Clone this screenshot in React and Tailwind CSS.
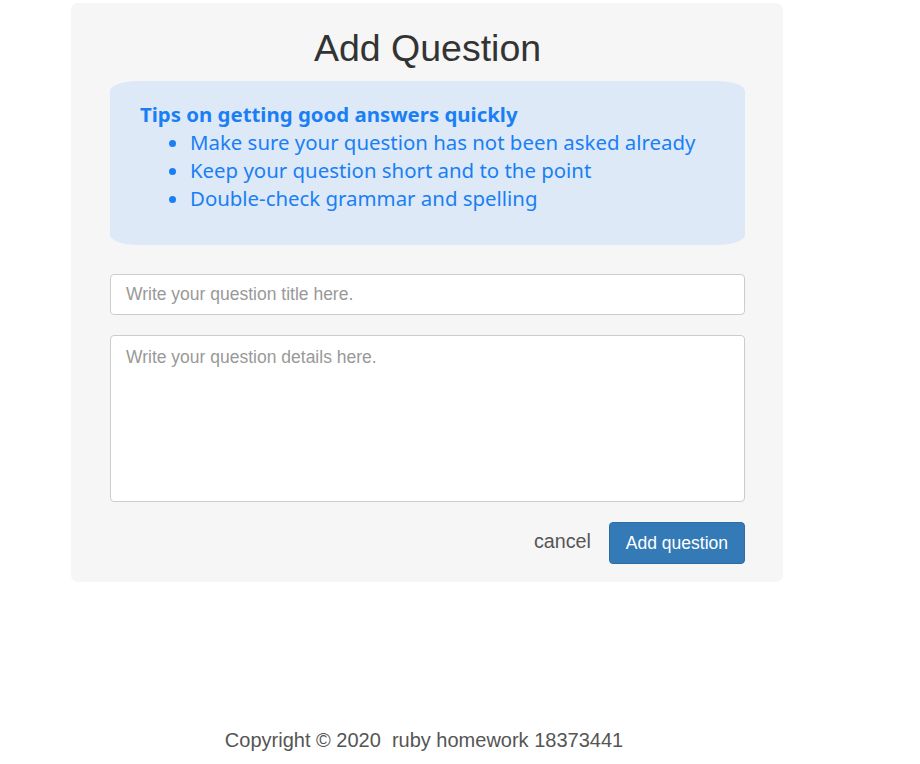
import React from 'react';

const tips = [
    'Make sure your question has not been asked already',
    'Keep your question short and to the point',
    'Double-check grammar and spelling',
];

const App = () => {
    return (
        <div className="min-h-[764px] bg-white pt-[3px] font-['Liberation_Sans',Arial,sans-serif]">
            <div className="ml-[71px] w-[712px]">
                <div className="bg-[#f6f6f6] rounded-[7px] pl-[39px] pr-[38px] pt-[25px] pb-[18px]">
                    <h1 className="text-center text-[37.5px] leading-[41px] text-[#333] mb-[12px]">Add Question</h1>

                    <div className="bg-[#dde9f7] rounded-[28px/10px] pl-[30px] pt-[19px] pb-[33px] font-['Noto_Sans','Open_Sans',sans-serif] text-[#1a7ff5]">
                        <h3 className="text-[20.4px] leading-[28px] font-bold">Tips on getting good answers quickly</h3>
                        <ul className="list-disc pl-[50px] text-[20.4px] leading-[28px]">
                            {tips.map((tip, i) => (
                                <li key={i}>{tip}</li>
                            ))}
                        </ul>
                    </div>

                    <input
                        type="text"
                        placeholder="Write your question title here."
                        className="mt-[29px] block w-full h-[41px] px-[15px] bg-white border border-[#ccc] rounded-[4px] text-[17.5px] text-[#555] placeholder:text-[#999] outline-none"
                    />
                    <textarea
                        placeholder="Write your question details here."
                        className="mt-[20px] block w-full h-[167px] px-[15px] pt-[8px] bg-white border border-[#ccc] rounded-[4px] text-[17.5px] text-[#555] placeholder:text-[#999] outline-none resize-none"
                    />

                    <div className="mt-[20px] flex items-center justify-end gap-[18px]">
                        <a className="text-[19.7px] text-[#555] cursor-pointer -mt-[3px]">cancel</a>
                        <button className="h-[42px] px-[16px] bg-[#337ab7] border border-[#2e6da4] rounded-[4px] text-white text-[17.5px]">
                            Add question
                        </button>
                    </div>
                </div>

                <footer className="mt-[146px] pr-[6px] text-center text-[20px] leading-[24px] text-[#555]">
                    Copyright © 2020&nbsp; ruby homework 18373441
                </footer>
            </div>
        </div>
    );
};

export default App;
